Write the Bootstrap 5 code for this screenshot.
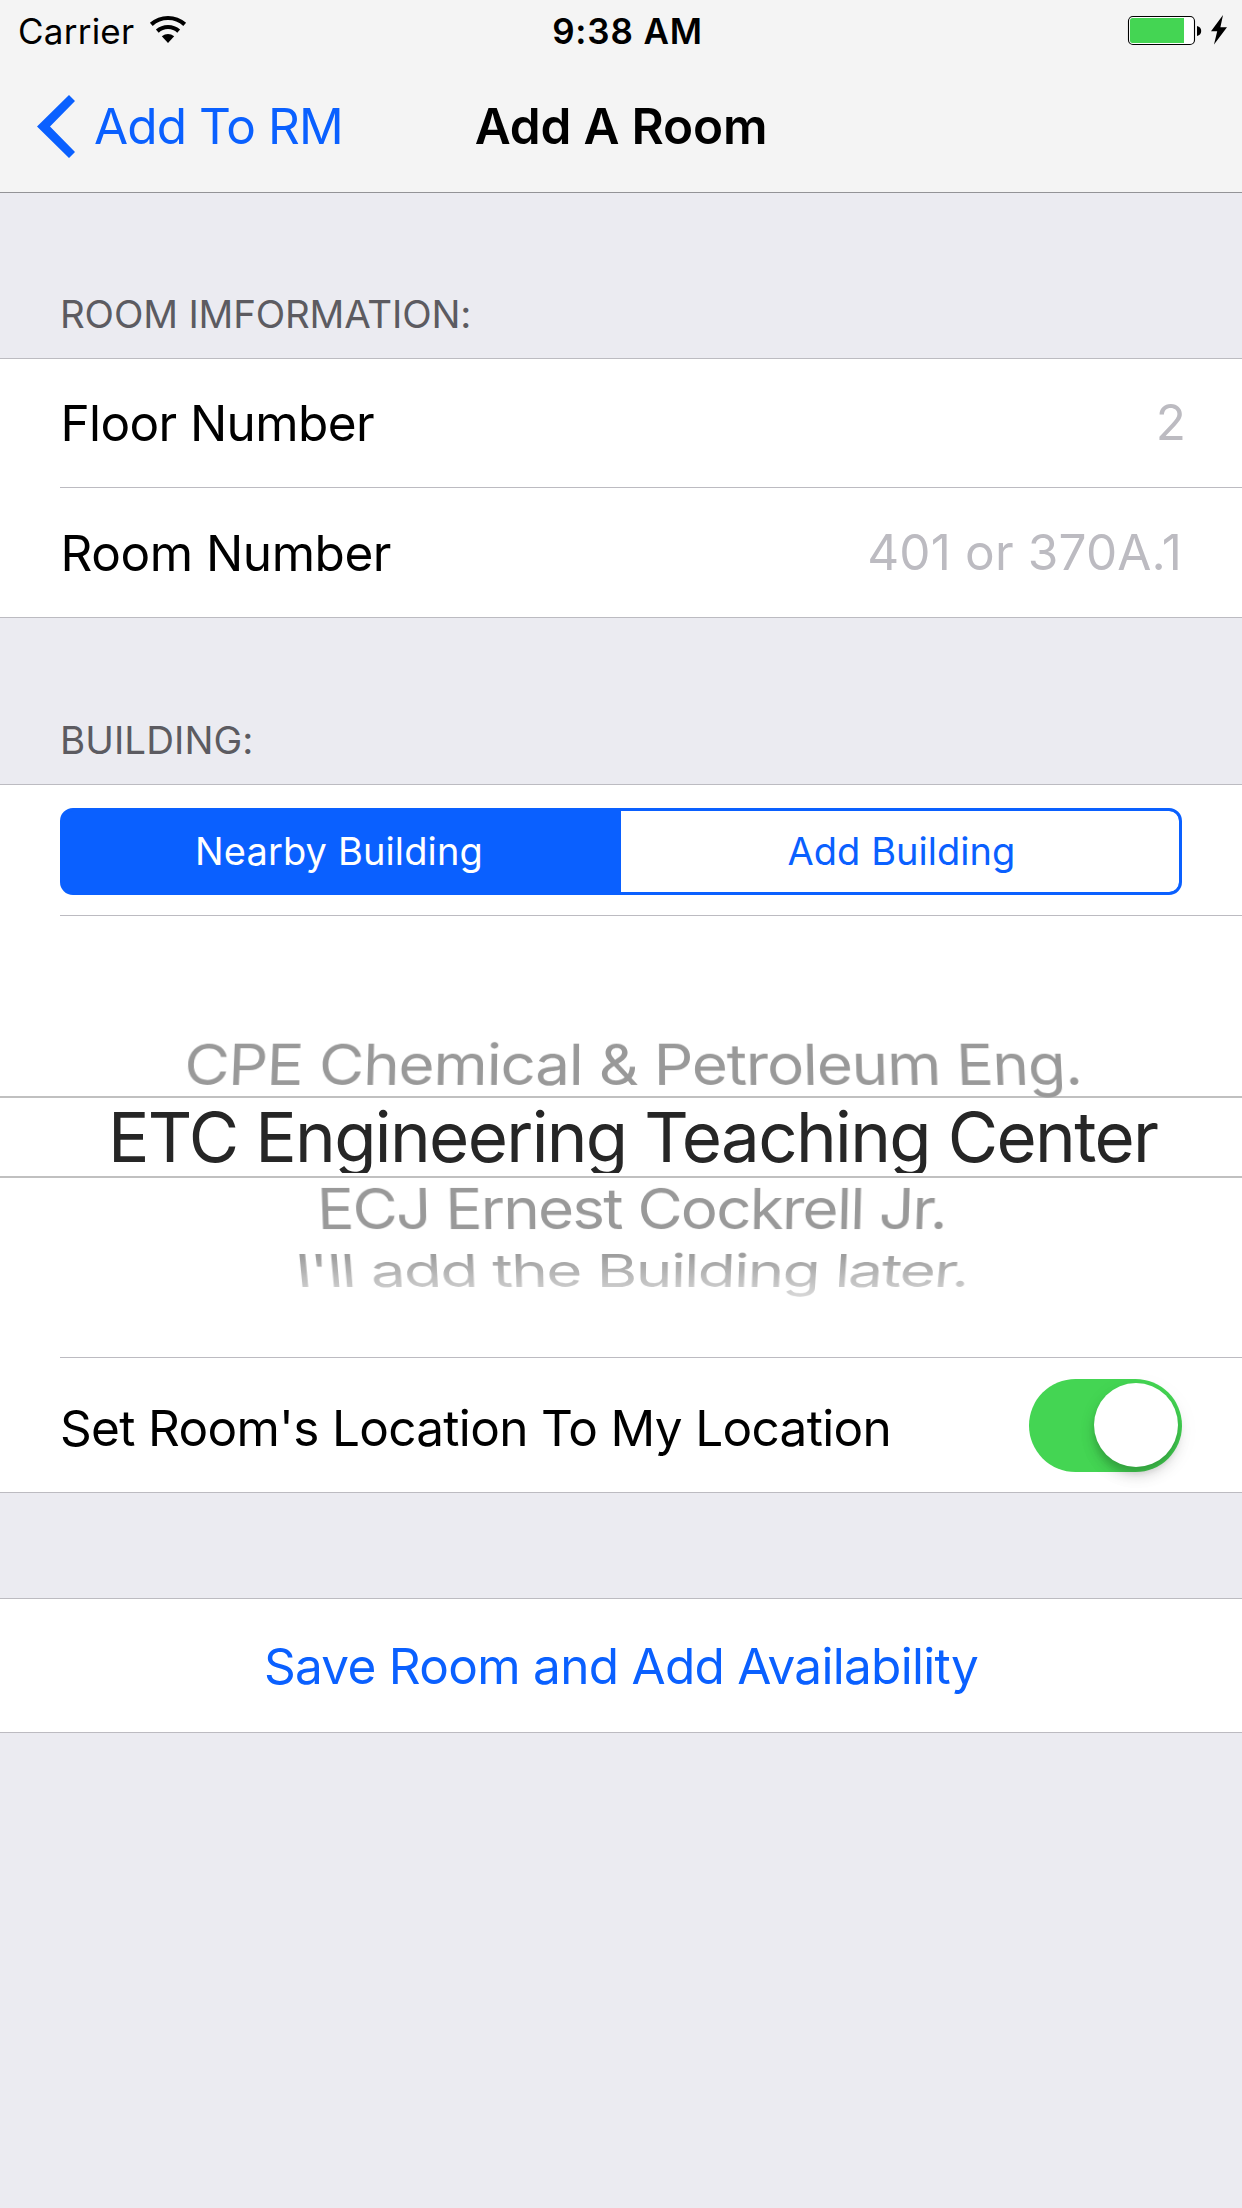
<!doctype html>
<html lang="en">
<head>
<meta charset="utf-8">
<meta name="viewport" content="width=device-width, initial-scale=1">
<title>Add A Room</title>
<link href="https://cdn.jsdelivr.net/npm/bootstrap@5.3.0/dist/css/bootstrap.min.css" rel="stylesheet">
<style>
  :root { --tint: #0a60ff; --hair: #bcbbc1; --page: #ebebf1; }
  body { font-family: Inter, "Liberation Sans", sans-serif; background: var(--page); color: #000; font-size: 49.5px; line-height: 60px; min-height: 2208px; overflow-x: hidden; }
  .top-bar { background: #f4f4f4; border-bottom: 1px solid #939397; }
  .status-bar { grid-template-columns: 1fr auto 1fr; height: 60px; padding: 2px 12px 0 18px; font-size: 35px; line-height: 58px; }
  .status-bar svg { display: block; margin-top: -2px; }
  .carrier { letter-spacing: .24px; margin-right: 12.5px; }
  .clock { font-weight: 560; letter-spacing: .85px; padding-left: 7px; }
  .title-bar { grid-template-columns: 1fr auto 1fr; height: 132px; padding: 0 36px; }
  .back-link { color: var(--tint); letter-spacing: -.9px; }
  .back-link svg { margin-top: 1px; }
  .screen-title { font-size: 49.5px; font-weight: 600; letter-spacing: -.2px; line-height: 60px; }
  .group-label { color: #5c5b61; font-size: 38.5px; line-height: 39px; letter-spacing: -.17px; padding: 0 60px 24.5px; }
  .group-label.first-label { height: 165px; }
  .group-label.next-label { height: 166px; letter-spacing: .06px; }
  .form-group-block { background: #fff; border-top: 1px solid var(--hair); border-bottom: 1px solid var(--hair); }
  .form-line { margin-left: 60px; padding-right: 60px; }
  .form-line.ruled { border-bottom: 1px solid var(--hair); }
  .h-floor, .h-room { height: 129px; }
  .h-floor { padding-right: 56px; }
  .ls-floor { letter-spacing: -.62px; } .ls-room { letter-spacing: -.45px; } .ls-switch { letter-spacing: -.69px; }
  .ls-floor, .ls-room { padding-left: .5px; }
  .field { width: 600px; border: 0; padding: 0 0 2px 0; background: transparent; text-align: right; font-size: 49.5px; line-height: 60px; letter-spacing: .15px; outline: 0; color: #000; }
  .field::placeholder { color: var(--hair); opacity: 1; }
  .h-room .field { padding-bottom: 1px; }
  .seg-line { height: 131px; padding-top: 23px; }
  .segments { height: 87px; border: 3px solid var(--tint); border-radius: 13px; overflow: hidden; background: var(--tint); }
  .segments .btn { border: 0; border-radius: 0; padding: 0; margin: 0 !important; font-size: 38px; line-height: 81px; color: var(--tint); background: #fff; letter-spacing: .04px; }
  .segments .btn.active { background: var(--tint); color: #fff; letter-spacing: .13px; padding-right: 6px; }
  .segments .btn:last-child { border-radius: 0 9px 9px 0; padding-left: 3px; }
  .wheel { padding-top: 116px; height: 441px; white-space: nowrap; }
  .wheel-row { font-size: 62px; color: #999; }
  .wheel-row span { display: block; transform-origin: 621px 50%; }
  .w-prev span { line-height: 64px; padding-left: 184.4px; letter-spacing: -1.22px; transform: translateY(.7px) matrix3d(1,0,0,0, 0,.916,0,-.0001, 0,0,1,0, 0,0,0,1); }
  .w-current { font-size: 69px; color: #262626; height: 82px; border-top: 2px solid #c0c0c0; border-bottom: 2px solid #c0c0c0; }
  .w-current span { height: 75px; overflow: hidden; line-height: 78px; padding-left: 108px; letter-spacing: -1.64px; }
  .w-next span { line-height: 60px; padding-left: 317px; letter-spacing: -1.8px; transform: translateY(1px) matrix3d(1,0,0,0, 0,.916,0,.0001, 0,0,1,0, 0,0,0,1); }
  .w-last { -webkit-mask-image: linear-gradient(#000 14px, rgba(0,0,0,.52) 49px, rgba(0,0,0,.3) 65px); mask-image: linear-gradient(#000 14px, rgba(0,0,0,.52) 49px, rgba(0,0,0,.3) 65px); }
  .w-last span { line-height: 65px; padding-left: 295.5px; letter-spacing: -1.55px; transform: matrix3d(1,0,0,0, 0,.73,0,.00022, 0,0,1,0, 0,0,0,1); }
  .wheel-rule { margin-left: 60px; border-bottom: 1px solid var(--hair); }
  .h-switch { height: 134px; }
  .h-switch label { padding-top: 5px; }
  .toggle { width: 153px; height: 93px; border-radius: 47px; background: #44d553; padding: 4px 4px 0 0; }
  .toggle i { width: 84px; height: 84px; border-radius: 50%; background: #fff; box-shadow: 0 9px 14px rgba(0,0,0,.13), 0 6px 6px rgba(0,0,0,.11), 2px 6px 24px rgba(0,0,0,.05); }
  .save-block { margin-top: 105px; }
  .save-btn { height: 133px; color: var(--tint); font-size: 49.5px; letter-spacing: -.71px; line-height: 60px; padding: 0; border: 0; }
</style>
</head>
<body>
<header class="top-bar">
  <div class="status-bar d-grid align-items-center">
    <div class="d-flex align-items-center"><span class="carrier">Carrier</span>
      <svg width="42" height="60" viewBox="147.3 0 42 60" fill="none" stroke="#000" stroke-width="4.2"><path d="M151.6 24.4A25 25 0 0 1 185 24.4M157.6 31.1A16 16 0 0 1 179 31.1"/><path d="M162.1 36.3Q168.3 31.8 174.5 36.3L168.3 43Z" fill="#000" stroke="none"/></svg>
    </div>
    <div class="clock">9:38 AM</div>
    <div class="d-flex justify-content-end">
      <svg width="104" height="60" viewBox="1126 0 104 60"><rect x="1128.5" y="16.5" width="66" height="28" rx="4.5" fill="#fff" stroke="#000" stroke-width="1.1"/><path d="M1132.5 18H1184V43H1132.5Q1130 43 1130 40.5V20.5Q1130 18 1132.5 18Z" fill="#44d553"/><path d="M1197 26Q1201.2 27 1201.2 31T1197 36Z"/><path d="M1223 15L1211 31.3H1217.2L1214 44.500L1227 27.300H1220.400Z"/></svg>
    </div>
  </div>
  <nav class="title-bar d-grid align-items-center">
    <a href="#" class="back-link d-flex align-items-center text-decoration-none">
      <svg class="me-3" width="42" height="66" viewBox="36 94 42 66"><path d="M69 95L75 101L50 126.500L75 152L69 158L37 126.500Z" fill="#0a60ff"/></svg><span>Add To RM</span></a>
    <h1 class="screen-title m-0">Add A Room</h1>
    <span></span>
  </nav>
</header>
<main>
  <div class="group-label first-label d-flex align-items-end">ROOM IMFORMATION:</div>
  <section class="form-group-block">
    <div class="form-line ruled h-floor d-flex justify-content-between align-items-center"><label class="ls-floor" for="floor">Floor Number</label><input class="field" id="floor" placeholder="2"></div>
    <div class="form-line h-room d-flex justify-content-between align-items-center"><label class="ls-room" for="room">Room Number</label><input class="field" id="room" placeholder="401 or 370A.1"></div>
  </section>
  <div class="group-label next-label d-flex align-items-end">BUILDING:</div>
  <section class="form-group-block">
    <div class="form-line ruled seg-line">
      <div class="segments btn-group d-flex"><button type="button" class="btn w-50 active">Nearby Building</button><button type="button" class="btn w-50">Add Building</button></div>
    </div>
    <div class="wheel">
      <div class="wheel-row w-prev"><span>CPE Chemical &amp; Petroleum Eng.</span></div>
      <div class="wheel-row w-current"><span>ETC Engineering Teaching Center</span></div>
      <div class="wheel-row w-next"><span>ECJ Ernest Cockrell Jr.</span></div>
      <div class="wheel-row w-last"><span>I'll add the Building later.</span></div>
    </div>
    <div class="wheel-rule"></div>
    <div class="form-line h-switch d-flex justify-content-between align-items-center"><label class="ls-switch">Set Room's Location To My Location</label>
      <div class="toggle d-flex justify-content-end" role="switch" aria-checked="true"><i></i></div></div>
  </section>
  <section class="form-group-block save-block"><button type="button" class="save-btn btn w-100 d-block">Save Room and Add Availability</button></section>
</main>
<script src="https://cdn.jsdelivr.net/npm/bootstrap@5.3.0/dist/js/bootstrap.bundle.min.js"></script>
</body>
</html>
